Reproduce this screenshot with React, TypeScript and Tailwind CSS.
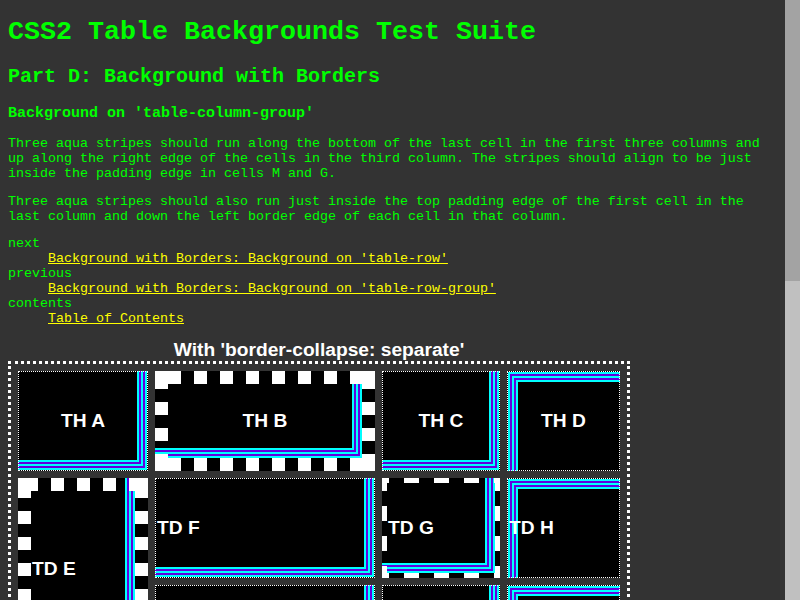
import React from "react";

type Corner = "br" | "tl";

const STRIPES = [
  "border-[#00ffff]",
  "border-[#6000e0]",
  "border-[#00ffff]",
  "border-[#6000e0]",
  "border-[#00ffff]",
];

function Nested({ level, corner }: { level: number; corner: Corner }) {
  if (level >= STRIPES.length) return null;
  const sides = corner === "br" ? "border-r-2 border-b-2" : "border-l-2 border-t-2";
  return (
    <div className={`h-full w-full ${sides} ${STRIPES[level]}`}>
      <Nested level={level + 1} corner={corner} />
    </div>
  );
}

// white segments along one side of a thick dashed border (corners included)
function segs(len: number, b: number, d: number): [number, number][] {
  const interior = len - 2 * b;
  const n = Math.max(1, Math.floor((interior / d + 1) / 2));
  const e = (interior - (2 * n - 1) * d) / 2;
  const out: [number, number][] = [[0, b + e]];
  let x = b + e + d;
  for (let i = 0; i < n - 1; i++) {
    out.push([x, x + d]);
    x += 2 * d;
  }
  out.push([len - b - e, len]);
  return out;
}

function DashedBorder({ w, h, b, d }: { w: number; h: number; b: number; d: number }) {
  const hs = segs(w, b, d);
  const vs = segs(h, b, d);
  return (
    <svg className="absolute left-0 top-0" width={w} height={h} shapeRendering="crispEdges">
      {hs.map(([a, c], i) => (
        <g key={"h" + i} fill="#ffffff">
          <rect x={a} y={0} width={c - a} height={b} />
          <rect x={a} y={h - b} width={c - a} height={b} />
        </g>
      ))}
      {vs.map(([a, c], i) => (
        <g key={"v" + i} fill="#ffffff">
          <rect x={0} y={a} width={b} height={c - a} />
          <rect x={w - b} y={a} width={b} height={c - a} />
        </g>
      ))}
    </svg>
  );
}

type CellDef = {
  label: string;
  place: string;
  dashed?: { w: number; h: number; b: number; d: number };
  stripeBox: string;
  corner: Corner;
  labelCls: string;
};

const BR1 = "left-0 top-0 right-px bottom-px";
const TL1 = "left-px top-px right-0 bottom-0";

const cells: CellDef[] = [
  { label: "TH A", place: "", stripeBox: BR1, corner: "br", labelCls: "justify-center" },
  { label: "TH B", place: "", dashed: { w: 220, h: 100, b: 13, d: 13 }, stripeBox: "left-0 top-0 right-[13px] bottom-[13px]", corner: "br", labelCls: "justify-center" },
  { label: "TH C", place: "", stripeBox: BR1, corner: "br", labelCls: "justify-center" },
  { label: "TH D", place: "", stripeBox: TL1, corner: "tl", labelCls: "justify-center" },
  { label: "TD E", place: "row-span-2", dashed: { w: 130, h: 182, b: 13, d: 13 }, stripeBox: "left-0 top-0 right-[13px] bottom-[13px]", corner: "br", labelCls: "justify-start pl-[14px]" },
  { label: "TD F", place: "", stripeBox: BR1, corner: "br", labelCls: "justify-start pl-[2px]" },
  { label: "TD G", place: "", dashed: { w: 118, h: 100, b: 5, d: 15 }, stripeBox: "left-0 top-0 right-[5px] bottom-[5px]", corner: "br", labelCls: "justify-start pl-[6px]" },
  { label: "TD H", place: "", stripeBox: TL1, corner: "tl", labelCls: "justify-start pl-[2px]" },
  { label: "TD I", place: "", stripeBox: BR1, corner: "br", labelCls: "justify-start pl-[2px]" },
  { label: "TD J", place: "", stripeBox: BR1, corner: "br", labelCls: "justify-start pl-[2px]" },
  { label: "TD K", place: "", stripeBox: TL1, corner: "tl", labelCls: "justify-start pl-[2px]" },
  { label: "TD L", place: "col-span-2", stripeBox: BR1, corner: "br", labelCls: "justify-start pl-[2px]" },
  { label: "TD M", place: "", dashed: { w: 118, h: 100, b: 5, d: 15 }, stripeBox: "left-0 top-0 right-[5px] bottom-[5px]", corner: "br", labelCls: "justify-start pl-[6px]" },
  { label: "TD N", place: "", stripeBox: TL1, corner: "tl", labelCls: "justify-start pl-[2px]" },
];

function Cell({ c }: { c: CellDef }) {
  return (
    <div className={`relative overflow-hidden bg-black ${c.place}`}>
      <div className={`absolute ${c.stripeBox}`}>
        <Nested level={0} corner={c.corner} />
      </div>
      {c.dashed ? (
        <DashedBorder {...c.dashed} />
      ) : (
        <div className="absolute inset-0 border border-dotted border-white" />
      )}
      <div className={`relative flex h-full items-center ${c.labelCls}`}>
        <span>{c.label}</span>
      </div>
    </div>
  );
}

function Table({ title }: { title: string }) {
  return (
    <div className="w-[622px] font-['Liberation_Sans',Arial,sans-serif] text-[19.2px] font-bold text-white">
      <div className="text-center leading-[22px]">{title}</div>
      <div className="grid grid-cols-[130px_220px_118px_113px] grid-rows-[100px_100px_75px_100px] gap-[7px] border-[3px] border-dotted border-white p-[7px] leading-[22px]">
        {cells.map((c) => (
          <Cell key={c.label} c={c} />
        ))}
      </div>
    </div>
  );
}

function Scrollbar() {
  return (
    <div className="flex h-full w-[15px] shrink-0 flex-col bg-[#c0c0c0]">
      <div className="h-[281px] w-full bg-[#a3a3a3]" />
    </div>
  );
}

export default function App() {
  return (
    <div className="flex h-screen w-full overflow-hidden bg-[#333333]">
      <div className="h-full min-w-0 flex-1 overflow-hidden px-2 pt-[17px] font-['Liberation_Mono',monospace] text-[13.33px] leading-[15px] text-[#00ff00]">
        <h1 className="m-0 text-[26.67px] font-bold leading-[30px]">CSS2 Table Backgrounds Test Suite</h1>
        <h2 className="m-0 mt-[18px] text-[20px] font-bold leading-[23px]">Part D: Background with Borders</h2>
        <h3 className="m-0 mt-[17px] text-[15px] font-bold leading-[17px]">Background on 'table-column-group'</h3>
        <p className="m-0 mt-[14px]">
          Three aqua stripes should run along the bottom of the last cell in the first three columns and
          up along the right edge of the cells in the third column. The stripes should align to be just
          inside the padding edge in cells M and G.
        </p>
        <p className="m-0 mt-[13px]">
          Three aqua stripes should also run just inside the top padding edge of the first cell in the
          last column and down the left border edge of each cell in that column.
        </p>
        <dl className="m-0 mt-[12px]">
          <dt>next</dt>
          <dd className="ml-10">
            <a className="text-[#ffff00] underline">Background with Borders: Background on 'table-row'</a>
          </dd>
          <dt>previous</dt>
          <dd className="ml-10">
            <a className="text-[#ffff00] underline">Background with Borders: Background on 'table-row-group'</a>
          </dd>
          <dt>contents</dt>
          <dd className="ml-10">
            <a className="text-[#ffff00] underline">Table of Contents</a>
          </dd>
        </dl>
        <div className="mt-[13px]">
          <Table title="With 'border-collapse: separate'" />
        </div>
      </div>
      <Scrollbar />
    </div>
  );
}
